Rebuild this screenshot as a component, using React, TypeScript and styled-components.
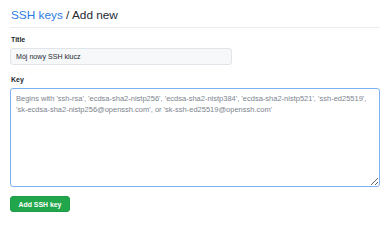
import styled, { createGlobalStyle } from "styled-components";

const GlobalStyle = createGlobalStyle`
  body {
    margin: 0;
    background: #ffffff;
    font-family: "Liberation Sans", Arial, sans-serif;
    color: #24292f;
  }
`;

const Page = styled.div`
  padding: 8px 10px 0 10px;
  width: 370px;
`;

const Header = styled.div`
  font-size: 11.8px;
  line-height: 14px;
  padding: 0 1px 5px 1px;
  border-bottom: 1px solid #eaecef;
  color: #24292f;
`;

const Crumb = styled.a`
  color: #2a7be4;
  text-decoration: none;
`;

const Group = styled.div<{ top: number }>`
  margin-top: ${(p) => p.top}px;
`;

const Label = styled.label`
  display: block;
  font-size: 7px;
  font-weight: bold;
  line-height: 8px;
  margin-bottom: 4px;
  padding-left: 1px;
  color: #24292f;
`;

const Input = styled.input`
  display: block;
  box-sizing: border-box;
  width: 222px;
  height: 17px;
  padding: 0 5px;
  font-family: "Liberation Sans", Arial, sans-serif;
  font-size: 7.1px;
  color: #24292f;
  background: #f6f8fa;
  border: 1px solid #e1e4e8;
  border-radius: 3px;
  outline: none;
`;

const TextArea = styled.textarea`
  display: block;
  box-sizing: border-box;
  width: 370px;
  height: 99px;
  padding: 5px 5px 4px 5px;
  font-family: "Liberation Sans", Arial, sans-serif;
  font-size: 7.5px;
  line-height: 10.5px;
  color: #24292f;
  background: #ffffff;
  border: 1.5px solid #7fb0f5;
  border-radius: 3px;
  outline: none;
  resize: vertical;
  &::placeholder {
    color: #7d858e;
  }
`;

const Button = styled.button`
  display: block;
  margin-top: 9px;
  width: 60px;
  height: 16px;
  padding: 0;
  font-family: "Liberation Sans", Arial, sans-serif;
  font-size: 6.9px;
  font-weight: bold;
  color: #ffffff;
  background: #22a64b;
  border: 1px solid #1f9c45;
  border-radius: 3px;
`;

export default function App() {
  return (
    <>
      <GlobalStyle />
      <Page>
        <Header>
          <Crumb href="#">SSH keys</Crumb> / Add new
        </Header>
        <Group top={8}>
          <Label>Title</Label>
          <Input defaultValue="Mój nowy SSH klucz" />
        </Group>
        <Group top={11}>
          <Label>Key</Label>
          <TextArea placeholder="Begins with 'ssh-rsa', 'ecdsa-sha2-nistp256', 'ecdsa-sha2-nistp384', 'ecdsa-sha2-nistp521', 'ssh-ed25519', 'sk-ecdsa-sha2-nistp256@openssh.com', or 'sk-ssh-ed25519@openssh.com'" />
        </Group>
        <Button>Add SSH key</Button>
      </Page>
    </>
  );
}
